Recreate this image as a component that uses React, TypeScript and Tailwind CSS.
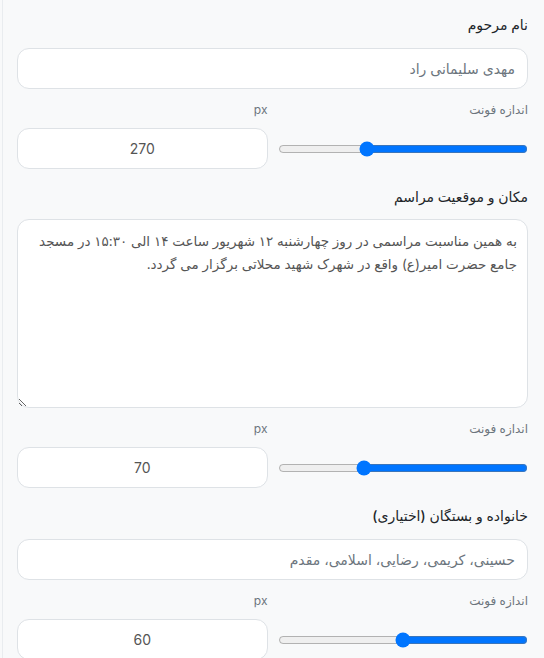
import { useState } from "react";

function SizeRow({ value, min, max, onChange }: { value: number; min: number; max: number; onChange: (v: number) => void }) {
  return (
    <div className="mt-3">
      <div className="grid grid-cols-2 gap-[10px] text-[12px] leading-[18px] text-[#6c757d]">
        <span>اندازه فونت</span>
        <span>px</span>
      </div>
      <div className="grid grid-cols-2 gap-[10px] mt-[9px] items-center">
        <input
          type="range"
          min={min}
          max={max}
          value={value}
          onChange={(e) => onChange(Number(e.target.value))}
          className="w-full m-0"
        />
        <input
          type="text"
          value={value}
          onChange={(e) => onChange(Number(e.target.value) || 0)}
          className="h-[41px] w-full rounded-[12px] border border-[#dee2e6] bg-white text-center text-[14px] text-[#555] outline-none"
        />
      </div>
    </div>
  );
}

export default function App() {
  const [nameSize, setNameSize] = useState(270);
  const [placeSize, setPlaceSize] = useState(70);
  const [familySize, setFamilySize] = useState(60);
  const [name, setName] = useState("مهدی سلیمانی راد");
  const [place, setPlace] = useState(
    "به همین مناسبت مراسمی در روز چهارشنبه ۱۲ شهریور ساعت ۱۴ الی ۱۵:۳۰ در مسجد جامع حضرت امیر(ع) واقع در شهرک شهید محلاتی برگزار می گردد."
  );
  const [family, setFamily] = useState("حسینی، کریمی، رضایی، اسلامی، مقدم");

  return (
    <div
      dir="rtl"
      className="min-h-screen bg-[#f8f9fa] pl-[2px]"
      style={{ fontFamily: 'Inter, "DejaVu Sans", sans-serif' }}
    >
      <div className="min-h-screen border-l border-[#e9ecef] pr-[16px] pl-[14px] pt-[15px]">
        {/* Name */}
        <label className="block text-[14px] leading-[20px] font-medium text-[#212529]">نام مرحوم</label>
        <input
          type="text"
          value={name}
          onChange={(e) => setName(e.target.value)}
          className="mt-[13px] h-[41px] w-full rounded-[12px] border border-[#dee2e6] bg-white px-3 text-[14px] text-[#6c757d] outline-none"
        />
        <SizeRow value={nameSize} min={100} max={360} onChange={setNameSize} />

        {/* Place */}
        <label className="mt-[18px] block text-[14px] leading-[20px] font-medium text-[#212529]">مکان و موقعیت مراسم</label>
        <textarea
          value={place}
          onChange={(e) => setPlace(e.target.value)}
          className="mt-3 block h-[189px] w-full rounded-[12px] border border-[#dee2e6] bg-white px-[10px] py-[10px] text-[13.5px] leading-[23px] text-[#555] outline-none"
        />
        <SizeRow value={placeSize} min={30} max={90} onChange={setPlaceSize} />

        {/* Family */}
        <label className="mt-[18px] block text-[14px] leading-[20px] font-medium text-[#212529]">خانواده و بستگان (اختیاری)</label>
        <input
          type="text"
          value={family}
          onChange={(e) => setFamily(e.target.value)}
          className="mt-[13px] h-[41px] w-full rounded-[12px] border border-[#dee2e6] bg-white px-3 text-[14px] text-[#6c757d] outline-none"
        />
        <SizeRow value={familySize} min={30} max={90} onChange={setFamilySize} />
      </div>
    </div>
  );
}
